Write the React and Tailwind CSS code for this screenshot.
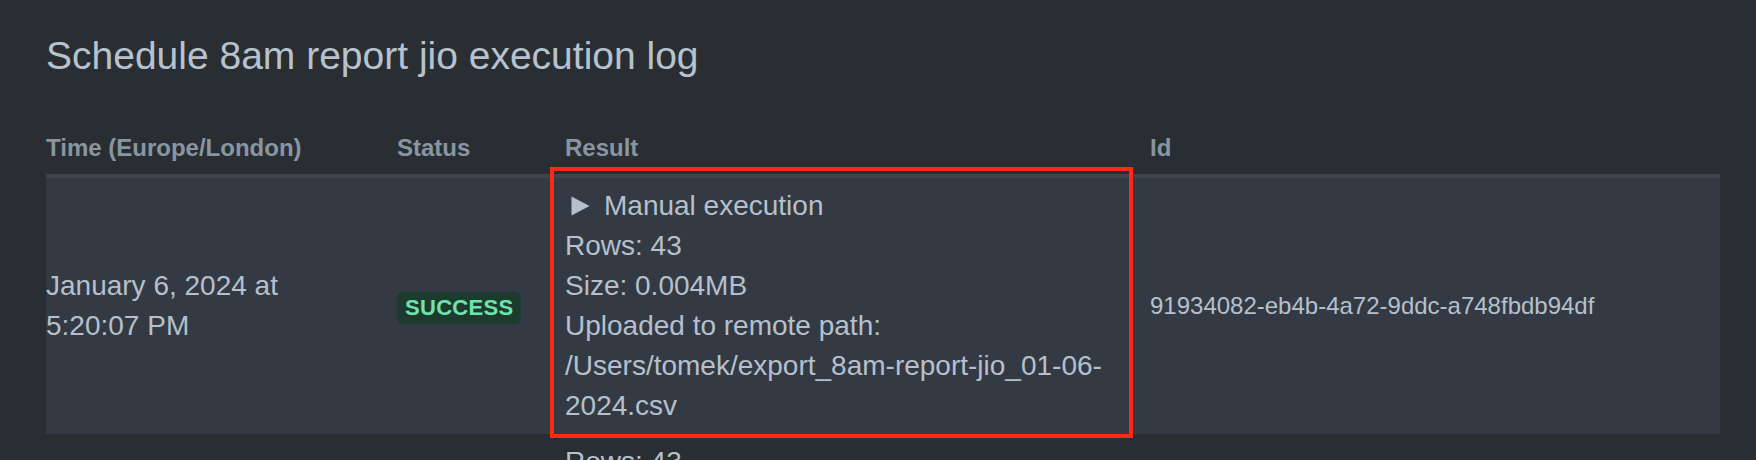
import React from "react";

function Triangle() {
  return (
    <svg
      width="19"
      height="20"
      viewBox="0 0 19 20"
      className="inline-block ml-[6px] mr-[14px] align-[-1px]"
    >
      <path d="M0.5 0.5 L18.5 10 L0.5 19.5 Z" fill="#b6c0cd" />
    </svg>
  );
}

export default function App() {
  const th =
    "pl-0 pr-8 py-2 text-left text-[24px] leading-[36px] font-bold text-[#8a95a2] align-bottom";
  const td = "pl-0 pr-8 py-2 align-middle text-[28px] leading-[40px] text-[#b6c0cd]";
  return (
    <div className="relative min-h-screen bg-[#292e33] pl-[46px] pt-8 font-['Liberation_Sans',Arial,sans-serif]">
      <h1 className="text-[39px] leading-[48px] font-normal text-[#b8c2cf]">
        Schedule 8am report jio execution log
      </h1>
      <table className="mt-[42px] w-[1674px] table-fixed border-collapse">
        <colgroup>
          <col className="w-[351px]" />
          <col className="w-[168px]" />
          <col className="w-[585px]" />
          <col className="w-[570px]" />
        </colgroup>
        <thead>
          <tr className="border-b-4 border-[#3c454c]">
            <th className={th}>Time (Europe/London)</th>
            <th className={th}>Status</th>
            <th className={th}>Result</th>
            <th className={th}>Id</th>
          </tr>
        </thead>
        <tbody>
          <tr className="bg-[#333a43]">
            <td className={td}>January 6, 2024 at 5:20:07 PM</td>
            <td className={td}>
              <span className="inline-block rounded-md bg-[#1d3a2f] px-2 text-[22px] leading-[32px] font-bold tracking-[0.3px] text-[#6fe3ae]">
                SUCCESS
              </span>
            </td>
            <td className={td}>
              <div>
                <Triangle />
                Manual execution
              </div>
              <div>Rows: 43</div>
              <div>Size: 0.004MB</div>
              <div>
                Uploaded to remote path:
                /Users/tomek/export_8am-report-jio_01-06-2024.csv
              </div>
            </td>
            <td className="pl-0 pr-8 py-2 align-middle text-[24px] leading-[36px] text-[#b6c0cd]">
              91934082-eb4b-4a72-9ddc-a748fbdb94df
            </td>
          </tr>
          <tr>
            <td className={td}></td>
            <td className={td}></td>
            <td className={td}>
              <div>Rows: 43</div>
              <div>Size: 0.004MB</div>
              <div>
                Uploaded to remote path:
                /Users/tomek/export_8am-report-jio_01-06-2024.csv
              </div>
            </td>
            <td className={td}></td>
          </tr>
        </tbody>
      </table>
      <div className="pointer-events-none absolute left-[550px] top-[167px] h-[271px] w-[583px] border-4 border-[#ff2a14]" />
    </div>
  );
}
